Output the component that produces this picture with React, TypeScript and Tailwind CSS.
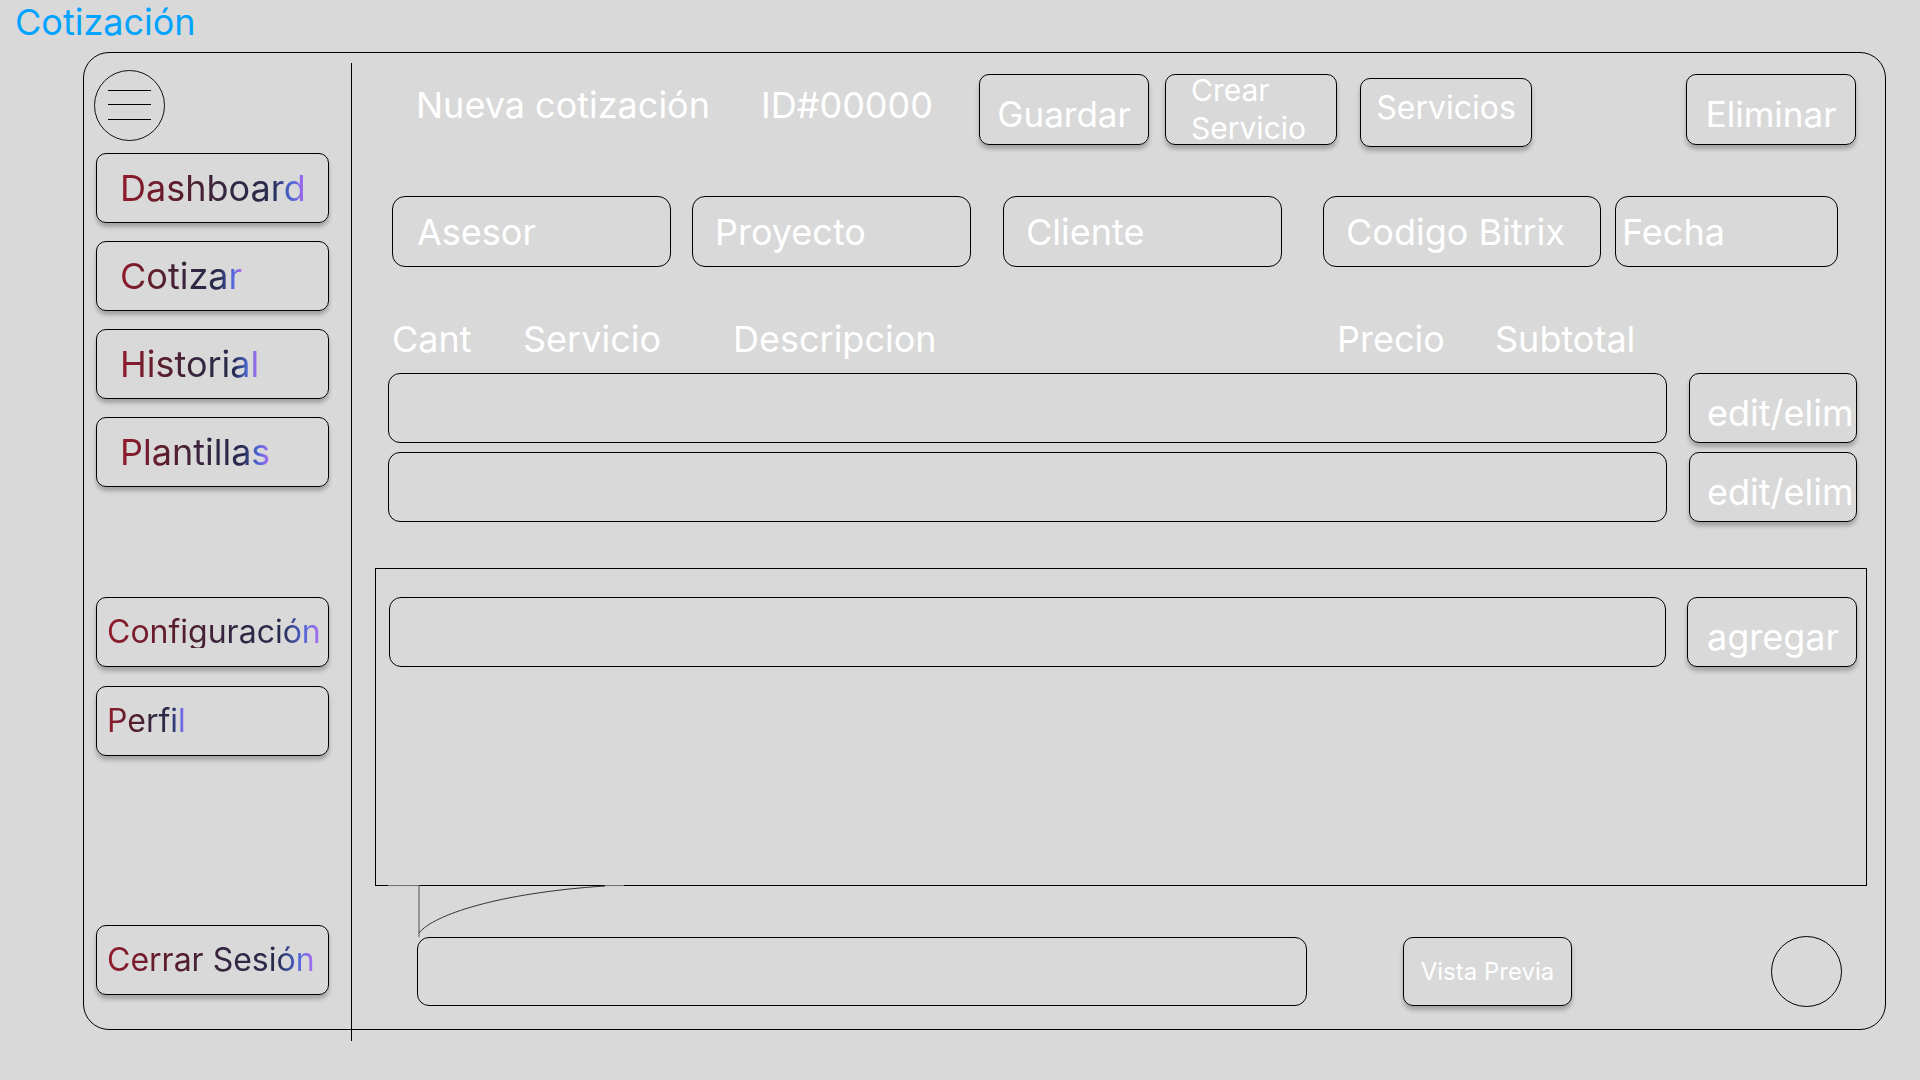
import React from "react";

const font = "font-['Inter','Noto_Sans',sans-serif]";

function SideButton({ label, big }: { label: string; big?: boolean }) {
  return (
    <div
      className={
        "flex h-[70px] w-[233px] items-center rounded-[10px] border border-black shadow-[0_4px_4px_rgba(0,0,0,0.25)] " +
        (big ? "pl-[23px] text-[36px] leading-[36px]" : "pl-[10px] text-[32px] leading-[32px]")
      }
    >
      <span className="inline-block bg-[linear-gradient(90deg,#921b2d_0%,#5b1d2b_30%,#332640_58%,#272b4e_82%,#4d67d8_92%,#b36cf3_100%)] bg-clip-text text-transparent">
        {label}
      </span>
    </div>
  );
}

function Field({ label, w, pl }: { label: string; w: string; pl: string }) {
  return (
    <div className={"flex h-[71px] items-center rounded-[13px] border border-black text-[36px] leading-[36px] text-white " + w + " " + pl}>
      {label}
    </div>
  );
}

export default function App() {
  return (
    <div className={"h-[1080px] w-[1920px] overflow-hidden bg-[#d9d9d9] " + font}>
      {/* titulo */}
      <div className="h-[52px] pl-[15px] pt-[4px] text-[36px] leading-[36px] text-[#00a3ff]">Cotización</div>

      {/* marco */}
      <div className="ml-[83px] flex h-[978px] w-[1803px] rounded-[26px] border border-black">
        {/* sidebar */}
        <aside className="-mb-[12px] mt-[10px] flex w-[268px] flex-col border-r border-black pl-[12px]">
          <svg width="71" height="71" viewBox="0 0 71 71" className="ml-[-2px] mt-[7px]">
            <circle cx="35.5" cy="35.5" r="35" fill="none" stroke="#111" strokeWidth="1" />
            <line x1="14" y1="20.5" x2="57" y2="20.5" stroke="#000" strokeWidth="1.2" />
            <line x1="14" y1="34.5" x2="57" y2="34.5" stroke="#000" strokeWidth="1.2" />
            <line x1="14" y1="49.5" x2="57" y2="49.5" stroke="#000" strokeWidth="1.2" />
          </svg>
          <div className="mt-[12px] flex flex-col gap-[18px]">
            <SideButton label="Dashboard" big />
            <SideButton label="Cotizar" big />
            <SideButton label="Historial" big />
            <SideButton label="Plantillas" big />
          </div>
          <div className="mt-[110px] flex flex-col gap-[19px]">
            <SideButton label="Configuración" />
            <SideButton label="Perfil" />
          </div>
          <div className="mt-[169px]">
            <SideButton label="Cerrar Sesión" />
          </div>
        </aside>

        {/* contenido */}
        <main className="flex flex-1 flex-col">
          {/* cabecera */}
          <div className="mt-[21px] flex h-[73px] items-start">
            <div className="ml-[64px] mt-[13px] w-[345px] text-[36px] leading-[36px] text-white">Nueva cotización</div>
            <div className="mt-[13px] w-[218px] text-[36px] leading-[36px] text-white">ID#00000</div>
            <div className="flex h-[71px] w-[170px] justify-center rounded-[10px] border border-black pt-[22px] text-[35px] leading-[35px] text-white shadow-[0_4px_4px_rgba(0,0,0,0.25)]">
              Guardar
            </div>
            <div className="ml-[16px] flex h-[71px] w-[172px] flex-col rounded-[10px] border border-black pl-[25px] text-[30px] leading-[38px] text-white shadow-[0_4px_4px_rgba(0,0,0,0.25)]">
              <span className="-mt-[4px]">Crear</span>
              <span>Servicio</span>
            </div>
            <div className="ml-[23px] mt-[4px] flex h-[69px] w-[172px] justify-center rounded-[10px] border border-black pt-[13px] text-[32px] leading-[32px] text-white shadow-[0_4px_4px_rgba(0,0,0,0.25)]">
              Servicios
            </div>
            <div className="ml-[154px] flex h-[71px] w-[170px] justify-center rounded-[10px] border border-black pt-[22px] text-[35px] leading-[35px] text-white shadow-[0_4px_4px_rgba(0,0,0,0.25)]">
              Eliminar
            </div>
          </div>

          {/* campos */}
          <div className="ml-[40px] mt-[49px] flex">
            <Field label="Asesor" w="w-[279px]" pl="pl-[24px]" />
            <div className="ml-[21px]">
              <Field label="Proyecto" w="w-[279px]" pl="pl-[22px]" />
            </div>
            <div className="ml-[32px]">
              <Field label="Cliente" w="w-[279px]" pl="pl-[22px]" />
            </div>
            <div className="ml-[41px]">
              <Field label="Codigo Bitrix" w="w-[278px]" pl="pl-[22px]" />
            </div>
            <div className="ml-[14px]">
              <Field label="Fecha" w="w-[223px]" pl="pl-[6px]" />
            </div>
          </div>

          {/* encabezado tabla */}
          <div className="ml-[40px] mt-[54px] flex h-[36px] text-[36px] leading-[36px] text-white">
            <div className="w-[131px]">Cant</div>
            <div className="w-[210px]">Servicio</div>
            <div className="w-[604px]">Descripcion</div>
            <div className="w-[158px]">Precio</div>
            <div>Subtotal</div>
          </div>

          {/* filas */}
          {[0, 1].map((i) => (
            <div key={i} className={"ml-[36px] flex " + (i === 0 ? "mt-[16px]" : "mt-[9px]")}>
              <div className="h-[70px] w-[1279px] rounded-[12px] border border-black" />
              <div className="ml-[22px] h-[70px] w-[168px] whitespace-nowrap rounded-[10px] border border-black pl-[17px] pt-[21px] text-[36px] leading-[36px] text-white shadow-[0_4px_4px_rgba(0,0,0,0.25)]">
                edit/elim
              </div>
            </div>
          ))}

          {/* caja agregar */}
          <div className="relative ml-[23px] mt-[46px] h-[318px] w-[1492px] border border-black pl-[13px] pt-[28px]">
            <div className="flex">
              <div className="h-[70px] w-[1277px] rounded-[12px] border border-black" />
              <div className="ml-[21px] h-[70px] w-[170px] rounded-[10px] border border-black pl-[19px] pt-[21px] text-[36px] leading-[36px] text-white shadow-[0_4px_4px_rgba(0,0,0,0.25)]">
                agregar
              </div>
            </div>
            <svg width="236" height="53" viewBox="0 0 236 53" className="absolute left-[12px] top-[316px]">
              <line x1="0" y1="0.5" x2="31" y2="0.5" stroke="#777" strokeWidth="1.2" />
              <line x1="31" y1="0" x2="31" y2="52" stroke="#666" strokeWidth="1.2" />
              <path d="M31 48 C45 30 110 8 217 1" fill="none" stroke="#333" strokeWidth="1" />
              <line x1="217" y1="0.5" x2="236" y2="0.5" stroke="#777" strokeWidth="1.2" />
            </svg>
          </div>

          {/* pie */}
          <div className="ml-[65px] mt-[50px] flex items-center">
            <div className="h-[69px] w-[890px] rounded-[12px] border border-black" />
            <div className="ml-[96px] flex h-[69px] w-[169px] items-center justify-center rounded-[10px] border border-black text-[24px] leading-[24px] text-white shadow-[0_4px_4px_rgba(0,0,0,0.25)]">
              Vista Previa
            </div>
            <div className="ml-[199px] h-[71px] w-[71px] rounded-full border border-black" />
          </div>
        </main>
      </div>
    </div>
  );
}
